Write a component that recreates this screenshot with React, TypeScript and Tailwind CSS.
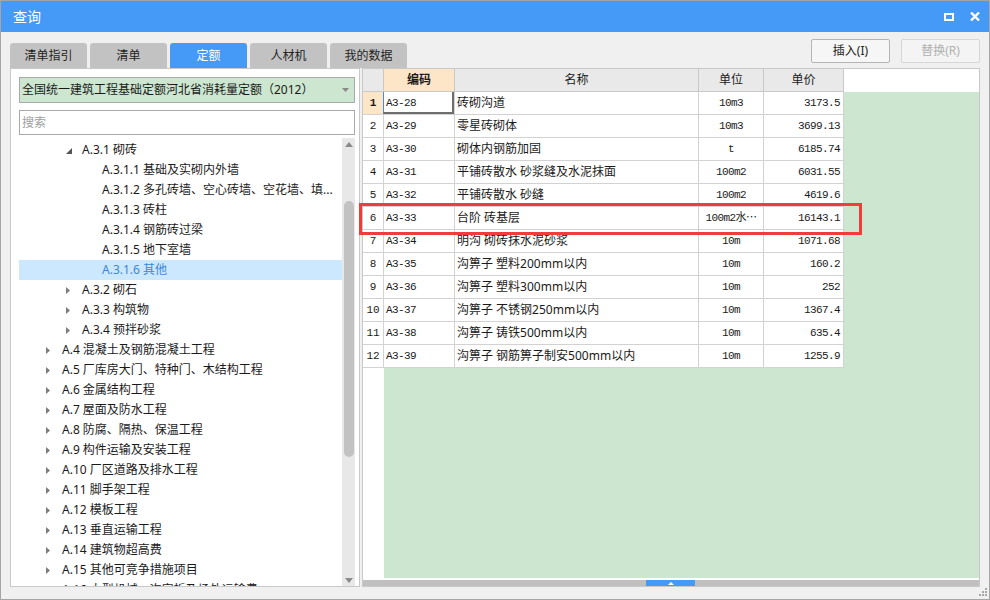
import clsx from 'clsx'

const ui = "font-['Noto_Sans','Noto_Sans_CJK_SC',sans-serif]"
const mono = "font-['Liberation_Mono','Noto_Sans_CJK_SC',monospace]"

type Node = { level: 1 | 2 | 3; text: string; open?: boolean; selected?: boolean }

const tree: Node[] = [
  { level: 2, open: true, text: 'A.3.1 砌砖' },
  { level: 3, text: 'A.3.1.1 基础及实砌内外墙' },
  { level: 3, text: 'A.3.1.2 多孔砖墙、空心砖墙、空花墙、填...' },
  { level: 3, text: 'A.3.1.3 砖柱' },
  { level: 3, text: 'A.3.1.4 钢筋砖过梁' },
  { level: 3, text: 'A.3.1.5 地下室墙' },
  { level: 3, text: 'A.3.1.6 其他', selected: true },
  { level: 2, text: 'A.3.2 砌石' },
  { level: 2, text: 'A.3.3 构筑物' },
  { level: 2, text: 'A.3.4 预拌砂浆' },
  { level: 1, text: 'A.4 混凝土及钢筋混凝土工程' },
  { level: 1, text: 'A.5 厂库房大门、特种门、木结构工程' },
  { level: 1, text: 'A.6 金属结构工程' },
  { level: 1, text: 'A.7 屋面及防水工程' },
  { level: 1, text: 'A.8 防腐、隔热、保温工程' },
  { level: 1, text: 'A.9 构件运输及安装工程' },
  { level: 1, text: 'A.10 厂区道路及排水工程' },
  { level: 1, text: 'A.11 脚手架工程' },
  { level: 1, text: 'A.12 模板工程' },
  { level: 1, text: 'A.13 垂直运输工程' },
  { level: 1, text: 'A.14 建筑物超高费' },
  { level: 1, text: 'A.15 其他可竞争措施项目' },
  { level: 1, text: 'A.16 大型机械一次安拆及场外运输费' },
]

const indent = { 1: 'pl-[23px]', 2: 'pl-[43px]', 3: 'pl-[63px]' }

const rows = [
  ['A3-28', '砖砌沟道', '10m3', '3173.5'],
  ['A3-29', '零星砖砌体', '10m3', '3699.13'],
  ['A3-30', '砌体内钢筋加固', 't', '6185.74'],
  ['A3-31', '平铺砖散水 砂浆缝及水泥抹面', '100m2', '6031.55'],
  ['A3-32', '平铺砖散水 砂缝', '100m2', '4619.6'],
  ['A3-33', '台阶 砖基层', '100m2水⋯', '16143.1'],
  ['A3-34', '明沟 砌砖抹水泥砂浆', '10m', '1071.68'],
  ['A3-35', '沟箅子 塑料200mm以内', '10m', '160.2'],
  ['A3-36', '沟箅子 塑料300mm以内', '10m', '252'],
  ['A3-37', '沟箅子 不锈钢250mm以内', '10m', '1367.4'],
  ['A3-38', '沟箅子 铸铁500mm以内', '10m', '635.4'],
  ['A3-39', '沟箅子 钢筋箅子制安500mm以内', '10m', '1255.9'],
]

const tabs = ['清单指引', '清单', '定额', '人材机', '我的数据']

function Closed() {
  return (
    <svg width="4" height="7" className="ml-[4px]">
      <polygon points="0,0 4,3.5 0,7" fill="#7c7c7c" />
    </svg>
  )
}

function Opened() {
  return (
    <svg width="6" height="6" className="ml-[4px] mt-[2px]">
      <polygon points="6,0 6,6 0,6" fill="#555" />
    </svg>
  )
}

function App() {
  return (
    <div className={clsx('relative flex h-[600px] w-[990px] flex-col overflow-hidden border border-[#a5a5a5] bg-[#f0f0f0] text-[12px] text-[#1a1a1a]', ui)}>
      {/* title bar */}
      <div className="flex h-[31px] shrink-0 items-center justify-between bg-[#4599f7] pl-[12px] pr-[9px] text-white">
        <span className="text-[14px]">查询</span>
        <div className="flex items-center gap-[16px]">
          <svg width="10" height="8" viewBox="0 0 10 8">
            <rect x="1" y="1" width="8" height="6" fill="none" stroke="white" strokeWidth="2" />
          </svg>
          <svg width="10" height="9" viewBox="0 0 10 9">
            <path d="M1 0.5 L9 8.5 M9 0.5 L1 8.5" stroke="white" strokeWidth="2.4" />
          </svg>
        </div>
      </div>

      <div className="flex min-h-0 flex-1 flex-col px-[9px] pb-[12px]">
        {/* tabs + buttons */}
        <div className="flex h-[36px] shrink-0 justify-between">
          <div className="flex items-end gap-[3px]">
            {tabs.map((t) => (
              <div
                key={t}
                className={clsx(
                  'flex h-[25px] w-[77px] items-center justify-center rounded-t-[3px] text-[12px]',
                  t === '定额' ? 'bg-[#4599f7] text-white' : 'bg-[#c2c2c2] text-[#222]'
                )}
              >
                {t}
              </div>
            ))}
          </div>
          <div className="mt-[7px] flex gap-[11px] self-start">
            <button className="flex h-[24px] w-[79px] items-center justify-center rounded-[2px] border border-[#b4b4b4] bg-[#f6f6f6] text-[12px] text-[#222]">
              插入(I)
            </button>
            <button className="flex h-[24px] w-[79px] items-center justify-center rounded-[2px] border border-[#d6d6d6] bg-[#f4f4f4] text-[12px] text-[#b0b0b0]">
              替换(R)
            </button>
          </div>
        </div>

        <div className="flex min-h-0 flex-1 gap-[2px]">
          {/* left panel */}
          <div className="flex min-h-0 w-[350px] flex-col overflow-hidden border border-[#c8c8c8] bg-white pl-[8px] pr-[4px]">
            <div className="mt-[8px] flex h-[26px] shrink-0 items-center justify-between border border-[#a9a9a9] bg-[#cde6d0] pl-[2px] pr-[5px]">
              <span>全国统一建筑工程基础定额河北省消耗量定额（2012）</span>
              <svg width="7" height="4">
                <polygon points="0,0 7,0 3.5,4" fill="#888" />
              </svg>
            </div>
            <div className="mt-[7px] flex h-[25px] shrink-0 items-center border border-[#a9a9a9] pl-[2px] text-[#a0a0a0]">搜索</div>
            <div className="mt-[3px] flex min-h-0 flex-1">
              <div className="min-w-0 flex-1 overflow-hidden pt-[2px]">
                {tree.map((n) => (
                  <div
                    key={n.text}
                    className={clsx(
                      'flex h-[20px] items-center whitespace-nowrap',
                      indent[n.level],
                      n.selected && 'bg-[#cce8ff] text-[#3d86d8]'
                    )}
                  >
                    <span className="flex w-[20px] shrink-0 items-center">
                      {n.level < 3 && (n.open ? <Opened /> : <Closed />)}
                    </span>
                    <span>{n.text}</span>
                  </div>
                ))}
              </div>
              <div className="flex w-[13px] flex-col items-center bg-[#e8e8e8]">
                <svg width="8" height="5" className="mt-[4px] shrink-0">
                  <polygon points="0,5 8,5 4,0" fill="#8a8a8a" />
                </svg>
                <div className="mt-[54px] h-[256px] w-[10px] shrink-0 rounded-full bg-[#c2c2c2]" />
                <div className="flex-1" />
                <svg width="8" height="5" className="mb-[3px] shrink-0">
                  <polygon points="0,0 8,0 4,5" fill="#8a8a8a" />
                </svg>
              </div>
            </div>
          </div>

          {/* right grid */}
          <div className="flex min-h-0 w-[618px] flex-col overflow-hidden border border-[#c8c8c8] bg-white">
            <div className="flex h-[23px] shrink-0 text-[12px]">
              <div className="w-[21px] border-b border-r border-[#c9c9c9] bg-[#e9e9e9]" />
              <div className="flex w-[71px] items-center justify-center border-b border-r border-[#c9c9c9] bg-[#fde5c7] font-bold">编码</div>
              <div className="flex w-[244px] items-center justify-center border-b border-r border-[#c9c9c9] bg-[#e9e9e9]">名称</div>
              <div className="flex w-[65px] items-center justify-center border-b border-r border-[#c9c9c9] bg-[#e9e9e9]">单位</div>
              <div className="flex w-[80px] items-center justify-center border-b border-r border-[#c9c9c9] bg-[#e9e9e9]">单价</div>
              <div className="flex-1 bg-white" />
            </div>
            <div className="flex min-h-0 flex-1 flex-col bg-[#cde6d0]">
              {rows.map((r, i) => (
                <div key={r[0]} className="flex h-[23px] shrink-0">
                  <div
                    className={clsx(
                      'flex w-[21px] items-center justify-center border-b border-r border-[#d2d2d2]',
                      mono,
                      'text-[11px]',
                      i === 0 ? 'bg-[#fde5c7] font-bold' : 'bg-white'
                    )}
                  >
                    {i + 1}
                  </div>
                  <div className={clsx('relative flex w-[71px] items-center border-b border-r border-[#d2d2d2] bg-white pl-[2px] text-[11px] tracking-[-0.6px]', mono)}>
                    {r[0]}
                    {i === 0 && (
                      <div className="absolute inset-0 -left-px border-b-2 border-l border-r-2 border-b-[#6e6e6e] border-l-[#3b8fe8] border-r-[#6e6e6e]" />
                    )}
                  </div>
                  <div className="flex w-[244px] items-center border-b border-r border-[#d2d2d2] bg-white pl-[2px] text-[12px] whitespace-nowrap">
                    {r[1]}
                  </div>
                  <div className={clsx('flex w-[65px] items-center justify-center border-b border-r border-[#d2d2d2] bg-white text-[11px] tracking-[-0.6px] whitespace-nowrap', mono)}>
                    {r[2]}
                  </div>
                  <div className={clsx('flex w-[80px] items-center justify-end border-b border-r border-[#d2d2d2] bg-white pr-[3px] text-[11px] tracking-[-0.6px]', mono)}>
                    {r[3]}
                  </div>
                </div>
              ))}
              <div className="flex flex-1">
                <div className="w-[21px] bg-white" />
              </div>
            </div>
            <div className="flex h-[8px] shrink-0 border-t-2 border-white bg-[#c0c0c0]">
              <div className="ml-[283px] flex w-[49px] items-center justify-center bg-[#4599f7]">
                <svg width="6" height="3">
                  <polygon points="0,3 6,3 3,0" fill="white" />
                </svg>
              </div>
            </div>
          </div>
        </div>
      </div>

      {/* red highlight annotation */}
      <div className="absolute left-[358px] top-[202px] h-[32px] w-[503px] border-[3px] border-[#f23c3c]" />

      {/* resize grip */}
      <svg width="10" height="10" className="absolute bottom-[2px] right-[1px]">
        <rect x="7" y="1" width="2" height="2" fill="#a8a8a8" />
        <rect x="4" y="4" width="2" height="2" fill="#a8a8a8" />
        <rect x="7" y="4" width="2" height="2" fill="#a8a8a8" />
        <rect x="1" y="7" width="2" height="2" fill="#a8a8a8" />
        <rect x="4" y="7" width="2" height="2" fill="#a8a8a8" />
        <rect x="7" y="7" width="2" height="2" fill="#a8a8a8" />
      </svg>
    </div>
  )
}

export default App
